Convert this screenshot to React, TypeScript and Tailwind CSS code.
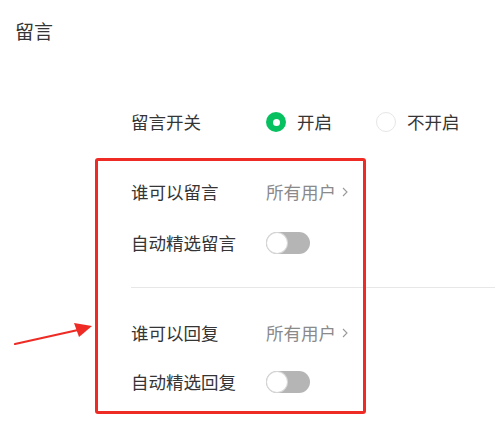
import React from "react";

const font = { fontFamily: '"Noto Sans CJK SC", "Noto Sans", sans-serif' };

function Radio({ checked, label }: { checked?: boolean; label: string }) {
  return (
    <div className="flex items-center gap-[11px] whitespace-nowrap">
      {checked ? (
        <span className="grid h-[20px] w-[20px] place-items-center rounded-full bg-[#07c160]">
          <span className="h-[7px] w-[7px] rounded-full bg-white" />
        </span>
      ) : (
        <span className="h-[20px] w-[20px] rounded-full border border-[#e6e6e6] bg-white" />
      )}
      <span>{label}</span>
    </div>
  );
}

function Toggle() {
  return (
    <span className="flex h-[22px] w-[44px] items-center rounded-full bg-[#b5b5b5] p-[1px]">
      <span className="h-[20px] w-[20px] rounded-full bg-white shadow-[0_0_0_1px_#d8d8d8]" />
    </span>
  );
}

function Row({ label, children, className = "" }: { label: string; children: React.ReactNode; className?: string }) {
  return (
    <div className={`flex h-[40px] items-center whitespace-nowrap ${className}`}>
      <span className="w-[135px] shrink-0">{label}</span>
      {children}
    </div>
  );
}

function Pick() {
  return (
    <span className="flex items-center gap-[6px] text-[#8a8a8a]">
      所有用户
      <svg width="6" height="10" viewBox="0 0 6 10" fill="none">
        <path d="M1 1l4 4-4 4" stroke="#9a9a9a" strokeWidth="1.1" />
      </svg>
    </span>
  );
}

export default function App() {
  return (
    <div className="relative h-[427px] w-[495px] overflow-hidden bg-white text-[17.5px] leading-[20px] text-[#353535]" style={font}>
      <div className="flex h-[62px] items-center pl-[15px] text-[19px]">留言</div>

      <div className="pl-[131px]">
        <Row label="留言开关" className="mt-[40px]">
          <div className="flex items-center gap-[44px]">
            <Radio checked label="开启" />
            <Radio label="不开启" />
          </div>
        </Row>
        <Row label="谁可以留言" className="mt-[30px]">
          <Pick />
        </Row>
        <Row label="自动精选留言" className="mt-[11px]">
          <Toggle />
        </Row>
        <div className="mt-[24px] h-px bg-[#e7e7e7]" />
        <Row label="谁可以回复" className="mt-[25px]">
          <Pick />
        </Row>
        <Row label="自动精选回复" className="mt-[9px]">
          <Toggle />
        </Row>
      </div>

      {/* annotation overlay */}
      <div className="pointer-events-none absolute left-[95px] top-[158px] h-[256px] w-[271px] rounded-[3px] border-[3px] border-[#ee2b24]" />
      <svg className="pointer-events-none absolute left-[12px] top-[318px]" width="84" height="30" viewBox="0 0 84 30">
        <path d="M3 26 L66 12" stroke="#ee2b24" strokeWidth="2.2" strokeLinecap="round" />
        <path d="M80 8 L62 5 L67 19 Z" fill="#ee2b24" />
      </svg>
    </div>
  );
}
